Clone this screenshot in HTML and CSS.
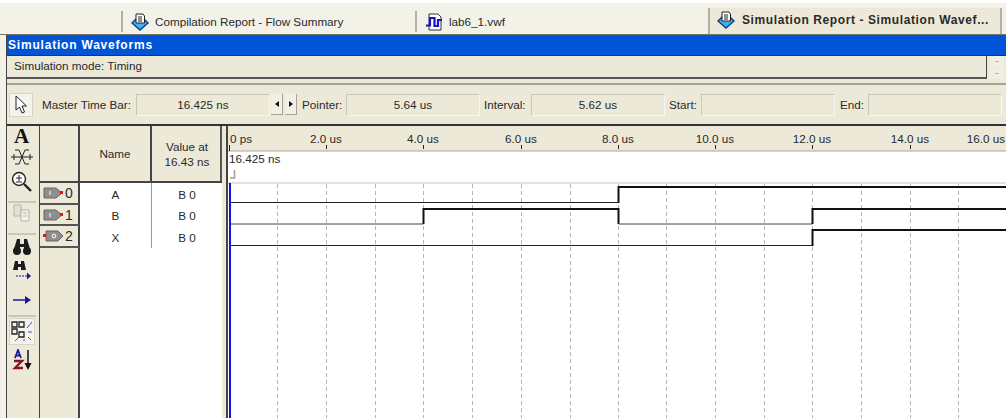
FILE: index.html
```html
<!DOCTYPE html>
<html>
<head>
  <title>Simulation Report - Simulation Waveforms</title>
  <link rel="stylesheet" href="styles.css">
</head>
<body>
  <div class="tabs">
    <div class="tab tab-first">
      <svg class="tab-icon" viewBox="0 0 18 18"><path d="M9 2 17 10 9 17 1 10Z" fill="#38b6ee" stroke="#123a8c" stroke-width="1.4"/><path d="M5 1h7l1.500 2v7H5Z" fill="#fff" stroke="#222"/><path d="M7 4h4M7 6h4M7 8h4" stroke="#222"/></svg>
      <span>Compilation Report - Flow Summary</span>
    </div>
    <div class="tab tab-second">
      <svg class="tab-icon" viewBox="0 0 18 18"><path d="M4 1h9l3 3v13H4Z" fill="#fff" stroke="#333"/><path d="M1 12.500h4V5h4.500v8H13V7h4" fill="none" stroke="#1414c8" stroke-width="2.200"/></svg>
      <span>lab6_1.vwf</span>
    </div>
    <div class="tab tab-active">
      <svg class="tab-icon" viewBox="0 0 18 18"><path d="M9 2 17 10 9 17 1 10Z" fill="#38b6ee" stroke="#123a8c" stroke-width="1.4"/><path d="M5 1h7l1.500 2v7H5Z" fill="#fff" stroke="#222"/><path d="M7 4h4M7 6h4M7 8h4" stroke="#222"/></svg>
      <span>Simulation Report - Simulation Wavef...</span>
    </div>
  </div>

  <div class="frame">
    <div class="title">Simulation Waveforms</div>
    <div class="mode-row">
      <div class="mode-box">Simulation mode: Timing</div>
      <div class="spin"><span class="spin-btn"><i></i></span><span class="spin-btn"><i></i></span></div>
    </div>
    <div class="divider"></div>

    <div class="timebar">
      <div class="pressed">
        <svg width="14" height="20" viewBox="0 0 14 20"><path d="M2 1v14l3.500-3 2.500 6 2.500-1-2.500-6h4.500Z" fill="#fff" stroke="#222"/></svg>
      </div>
      <label class="lbl lbl-master">Master Time Bar:</label>
      <div class="field">16.425 ns</div>
      <div class="arrows">
        <span class="arrow-btn"><i class="tri-left"></i></span>
        <span class="arrow-btn"><i class="tri-right"></i></span>
      </div>
      <label class="lbl lbl-pointer">Pointer:</label>
      <div class="field">5.64 us</div>
      <label class="lbl lbl-interval">Interval:</label>
      <div class="field">5.62 us</div>
      <label class="lbl lbl-start">Start:</label>
      <div class="field"></div>
      <label class="lbl lbl-end">End:</label>
      <div class="field"></div>
    </div>

    <div class="main">
      <div class="tools">
        <span class="tool tool-a">A</span>
        <svg class="tool tool-cross" width="24" height="20" viewBox="0 0 24 20"><path d="M5 3h4l6 14h4M5 17h4l6-14h4M1 10h22" fill="none" stroke="#222"/><path d="M4 7v6M20 7v6" stroke="#222"/></svg>
        <svg class="tool tool-zoom" width="24" height="24" viewBox="0 0 24 24"><circle cx="9" cy="9" r="6.500" fill="#fff" stroke="#222" stroke-width="1.400"/><path d="M6 8h6M9 5v6M6 12h6" stroke="#222"/><path d="M14 14l7 7" stroke="#222" stroke-width="2.400"/></svg>
        <div class="tool-sep sep-one"></div>
        <svg class="tool tool-copy" width="20" height="18" viewBox="0 0 20 18"><path d="M2 1h7v11H2Z" fill="#e4e1d2" stroke="#b5b3a8"/><path d="M9 6h8v11H9Z" fill="#f4f2ea" stroke="#b5b3a8"/><path d="M11 9h4M11 12h4" stroke="#b5b3a8"/></svg>
        <div class="tool-sep sep-two"></div>
        <svg class="tool tool-find" width="20" height="18" viewBox="0 0 20 18"><path d="M5 1h3v5h4V1h3l3 10h-6V9H8v2H2Z" fill="#1c1c1c"/><circle cx="5" cy="13" r="4" fill="#1c1c1c"/><circle cx="15" cy="13" r="4" fill="#1c1c1c"/></svg>
        <svg class="tool tool-findnext" width="22" height="22" viewBox="0 0 22 22"><path d="M4 1h3v3h3V1h3l2 9h-5V7H7v3H2Z" fill="#1c1c1c"/><path d="M5 16h11" stroke="#1a1a8c" stroke-dasharray="2 1"/><path d="M16 12.500 20 16l-4 3.500Z" fill="#1a1a8c"/></svg>
        <svg class="tool tool-next" width="22" height="12" viewBox="0 0 22 12"><path d="M2 6h13" stroke="#1a1a8c" stroke-width="1.500"/><path d="M14 2l6 4-6 4Z" fill="#1a1a8c"/></svg>
        <div class="tool-sep sep-three"></div>
        <div class="pressed pressed-tool">
          <svg width="24" height="24" viewBox="0 0 24 24"><path d="M2 2h5v5H2ZM9 2h5v5H9ZM2 9h5v5H2ZM9 12h5v5H9Z" fill="none" stroke="#222" stroke-width="1.300"/><path d="M22 2l-5 6M18 12h4M21 20l-3-3M5 21l4-4M14 21v-2" stroke="#3c4cf0"/></svg>
        </div>
        <svg class="tool tool-sort" width="24" height="22" viewBox="0 0 24 22"><path d="M5 9l3-8 3 8M6 6.500h4" fill="none" stroke="#1a1aa0" stroke-width="1.800"/><path d="M4 12h8l-7 7h8" fill="none" stroke="#8c1420" stroke-width="2.400"/><path d="M18 1v15" stroke="#111" stroke-width="1.500"/><path d="M14.500 14h7L18 21Z" fill="#111"/></svg>
      </div>

      <div class="signals">
        <div class="head-blank"></div>
        <div class="head-cell">Name</div>
        <div class="head-cell">Value at<br>16.43 ns</div>

        <div class="row-id">
          <svg width="21" height="12" viewBox="0 0 21 12"><path d="M1 1h12l6 5-6 5H1Z" fill="#8e8e8e" stroke="#666"/><path d="M7 4v4" stroke="#fff"/><rect x="17" y="4" width="3" height="3" fill="#f01010"/></svg>
          <span>0</span>
        </div>
        <div class="cell">A</div>
        <div class="cell">B 0</div>

        <div class="row-id">
          <svg width="21" height="12" viewBox="0 0 21 12"><path d="M1 1h12l6 5-6 5H1Z" fill="#8e8e8e" stroke="#666"/><path d="M7 4v4" stroke="#fff"/><rect x="17" y="4" width="3" height="3" fill="#f01010"/></svg>
          <span>1</span>
        </div>
        <div class="cell">B</div>
        <div class="cell">B 0</div>

        <div class="row-id">
          <svg width="21" height="12" viewBox="0 0 21 12"><path d="M3 1h12l5 5-5 5H3Z" fill="#8e8e8e" stroke="#666"/><circle cx="11" cy="6" r="1.800" fill="none" stroke="#fff"/><rect x="0" y="4" width="3" height="3" fill="#f01010"/></svg>
          <span>2</span>
        </div>
        <div class="cell">X</div>
        <div class="cell">B 0</div>

        <div class="filler-id"></div>
        <div class="filler"></div>
        <div class="filler"></div>
      </div>

      <div class="gap"></div>

      <svg class="wave" viewBox="228 126 778 292" width="778" height="292">
        <rect x="228" y="126" width="778" height="25" fill="#ece9d8"/>
        <path d="M228 151H1006" stroke="#a9a79a"/>
        <path d="M228 183H1006" stroke="#c4c2b8"/>

        <g class="ruler">
          <text x="230" y="143">0 ps</text>
          <text x="326" y="143" class="mid">2.0 us</text>
          <text x="423" y="143" class="mid">4.0 us</text>
          <text x="521" y="143" class="mid">6.0 us</text>
          <text x="618" y="143" class="mid">8.0 us</text>
          <text x="715" y="143" class="mid">10.0 us</text>
          <text x="812" y="143" class="mid">12.0 us</text>
          <text x="910" y="143" class="mid">14.0 us</text>
          <text x="986" y="143" class="mid">16.0 us</text>
          <text x="229" y="163">16.425 ns</text>
        </g>
        <path d="M229.500 145v6M326.500 145v4M423.500 145v4M521.500 145v4M618.500 145v4M715.500 145v4M812.500 145v4M910.500 145v4" stroke="#222"/>
        <path d="M234.500 170v8H230" fill="none" stroke="#a09e92" stroke-width="1.500"/>

        <path class="grid-lines" d="M277.500 184V418M326.500 184V418M375.500 184V418M423.500 184V418M472.500 184V418M521.500 184V418M570.500 184V418M618.500 184V418M666.500 184V418M715.500 184V418M764.500 184V418M812.500 184V418M861.500 184V418M910.500 184V418M958.500 184V418"/>

        <path d="M230 202.500H618.500" class="low"/>
        <path d="M618.500 203V187H1006" class="high"/>
        <path d="M230 224H423.500" class="low low-gray"/>
        <path d="M423.500 224V209H618.500V224" class="high"/>
        <path d="M618.500 224H812.500" class="low low-gray"/>
        <path d="M812.500 224V209H1006" class="high"/>
        <path d="M230 245.500H812.500" class="low"/>
        <path d="M812.500 246V230H1006" class="high"/>

        <path d="M230 183V418" stroke="#1414e0" stroke-width="2"/>
      </svg>
    </div>
  </div>
</body>
</html>
```

FILE: styles.css
```css
body {
  margin: 0;
  width: 1006px;
  height: 418px;
  box-sizing: border-box;
  overflow: hidden;
  background-color: #f3f1e7;
  border-top: 3px solid #fdfdfb;
  font-family: "Liberation Sans", Arial, sans-serif;
  font-size: 11.7px;
  color: #2a2a2a;
  display: flex;
  flex-direction: column;
}

/* tab strip */
.tabs {
  height: 31px;
  flex: none;
  display: flex;
  align-items: flex-end;
  background-color: #f3f2e9;
  border-bottom: 1px solid #77756a;
}

.tab {
  display: flex;
  align-items: center;
  gap: 6px;
  border-left: 2px solid #b3b1a4;
  height: 21px;
  margin-bottom: 2px;
  padding-left: 8px;
  white-space: nowrap;
}

.tab-first {
  margin-left: 121px;
  width: 284px;
}

.tab-second {
  width: 283px;
}

.tab-active {
  width: 294px;
  height: 26px;
  margin-bottom: 0;
  padding-bottom: 3px;
  box-sizing: border-box;
  background-color: #ece9d8;
  border-right: 2px solid #b3b1a4;
  font-size: 12px;
  font-weight: bold;
  letter-spacing: 0.6px;
  padding-left: 7px;
  gap: 7px;
}

.tab-icon {
  width: 18px;
  height: 18px;
  flex: none;
}

/* main frame */
.frame {
  flex: 1;
  margin-left: 6px;
  border-left: 1px solid #444;
  display: flex;
  flex-direction: column;
  background-color: #ece9d8;
  min-height: 0;
}

.title {
  height: 20px;
  line-height: 20px;
  flex: none;
  padding-left: 1px;
  background-color: #0054d8;
  color: #fff;
  font-size: 12px;
  font-weight: bold;
  letter-spacing: 0.8px;
  border-bottom: 1px solid #333;
}

.mode-row {
  height: 23px;
  flex: none;
  display: flex;
}

.mode-box {
  width: 972px;
  padding-left: 7px;
  line-height: 19px;
  border-right: 1px solid #444;
  border-bottom: 2px solid #555;
}

.spin {
  display: flex;
  flex-direction: column;
  gap: 1px;
  margin-left: 3px;
}

.spin-btn {
  width: 14px;
  height: 11px;
  display: flex;
  align-items: center;
  justify-content: center;
  background-color: #f1efe4;
}

.spin-btn i {
  width: 4px;
  height: 1px;
  background-color: #b9b7aa;
}

.divider {
  height: 4px;
  flex: none;
  border-bottom: 2px solid #a5a397;
}

.timebar {
  height: 39px;
  flex: none;
  display: flex;
  align-items: center;
  box-sizing: border-box;
}

.pressed {
  width: 24px;
  height: 24px;
  margin-left: 2px;
  display: flex;
  align-items: center;
  justify-content: center;
  background-color: #f4f3ec;
  border: 1px solid #d6d4c6;
  box-sizing: border-box;
}

.lbl {
  flex: none;
}

.lbl-master {
  margin-left: 9px;
  width: 94px;
}

.lbl-pointer {
  margin-left: 5px;
  width: 44px;
}

.lbl-interval {
  margin-left: 4px;
  width: 47px;
}

.lbl-start {
  margin-left: 4px;
  width: 32px;
}

.lbl-end {
  margin-left: 5px;
  width: 28px;
}

.field {
  width: 134px;
  height: 22px;
  line-height: 20px;
  flex: none;
  text-align: center;
  box-sizing: border-box;
  border: 1px solid #c9c7b8;
  border-right-color: #f8f7f1;
  border-bottom-color: #f8f7f1;
}

.arrows {
  display: flex;
  gap: 2px;
  margin-left: 1px;
}

.arrow-btn {
  width: 12px;
  height: 21px;
  display: flex;
  align-items: center;
  justify-content: center;
  background-color: #f2f0e6;
  border-right: 1px solid #a5a397;
  border-bottom: 1px solid #a5a397;
  box-sizing: border-box;
}

.tri-left {
  border: 3px solid transparent;
  border-left: 0;
  border-right: 4px solid #111;
}

.tri-right {
  border: 3px solid transparent;
  border-right: 0;
  border-left: 4px solid #111;
}

.main {
  flex: 1;
  display: flex;
  min-height: 0;
  border-top: 2px solid #333;
}

/* left tool column */
.tools {
  width: 29px;
  padding-right: 3px;
  flex: none;
  display: flex;
  flex-direction: column;
  align-items: center;
  border-right: 1px solid #444;
}

.tool {
  flex: none;
  display: block;
}

.tool-a {
  font-family: "Liberation Serif", serif;
  font-weight: bold;
  font-size: 21px;
  line-height: 22px;
  color: #111;
  margin-top: -1px;
  margin-bottom: -1px;
}

.tool-cross {
  margin-top: 1px;
}

.tool-zoom {
  margin-top: 3px;
}

.tool-sep {
  width: 28px;
  height: 2px;
  flex: none;
  background-color: #c9c7b8;
}

.sep-one {
  margin-top: 7px;
}

.tool-copy {
  margin-top: 1px;
}

.sep-two {
  margin-top: 11px;
}

.tool-find {
  margin-top: 3px;
}

.tool-findnext {
  margin-top: 4px;
}

.tool-next {
  margin-top: 12px;
}

.sep-three {
  margin-top: 9px;
}

.pressed-tool {
  width: 26px;
  height: 27px;
  margin: 1px 0 0;
}

.tool-sort {
  margin-top: 4px;
}

/* signal table */
.signals {
  width: 182px;
  flex: none;
  display: grid;
  grid-template-columns: 40px 72px 70px;
  grid-template-rows: 57px 22px 21px 22px 1fr;
  border-right: 2px solid #555;
  box-sizing: border-box;
}

.head-blank,
.head-cell {
  border-right: 2px solid #444;
  border-bottom: 2px solid #444;
}

.head-cell {
  display: flex;
  align-items: center;
  justify-content: center;
  text-align: center;
  line-height: 15px;
}

.head-cell:nth-child(3) {
  border-right: 0;
}

.row-id {
  display: flex;
  align-items: center;
  gap: 1px;
  padding-left: 3px;
  font-size: 14px;
  border-right: 2px solid #444;
  border-bottom: 2px solid #555;
  box-sizing: border-box;
}

.cell {
  display: flex;
  align-items: center;
  justify-content: center;
  background-color: #fff;
}

.cell:nth-child(3n+2) {
  border-right: 1px solid #999;
}

.filler-id {
  border-right: 2px solid #444;
}

.filler {
  background-color: #fff;
}

.gap {
  width: 6px;
  flex: none;
  box-sizing: border-box;
  border-right: 2px solid #444;
}

/* waveform canvas */
.wave {
  flex: none;
  display: block;
  background-color: #fff;
}

.ruler text {
  font-size: 11.7px;
  fill: #2a2a2a;
}

.ruler .mid {
  text-anchor: middle;
}

.grid-lines {
  stroke: #b5b5b5;
  stroke-dasharray: 4 3;
  fill: none;
}

.low {
  stroke: #222;
  stroke-width: 1;
  fill: none;
}

.low-gray {
  stroke: #444;
}

.high {
  stroke: #111;
  stroke-width: 2;
  fill: none;
}
```
